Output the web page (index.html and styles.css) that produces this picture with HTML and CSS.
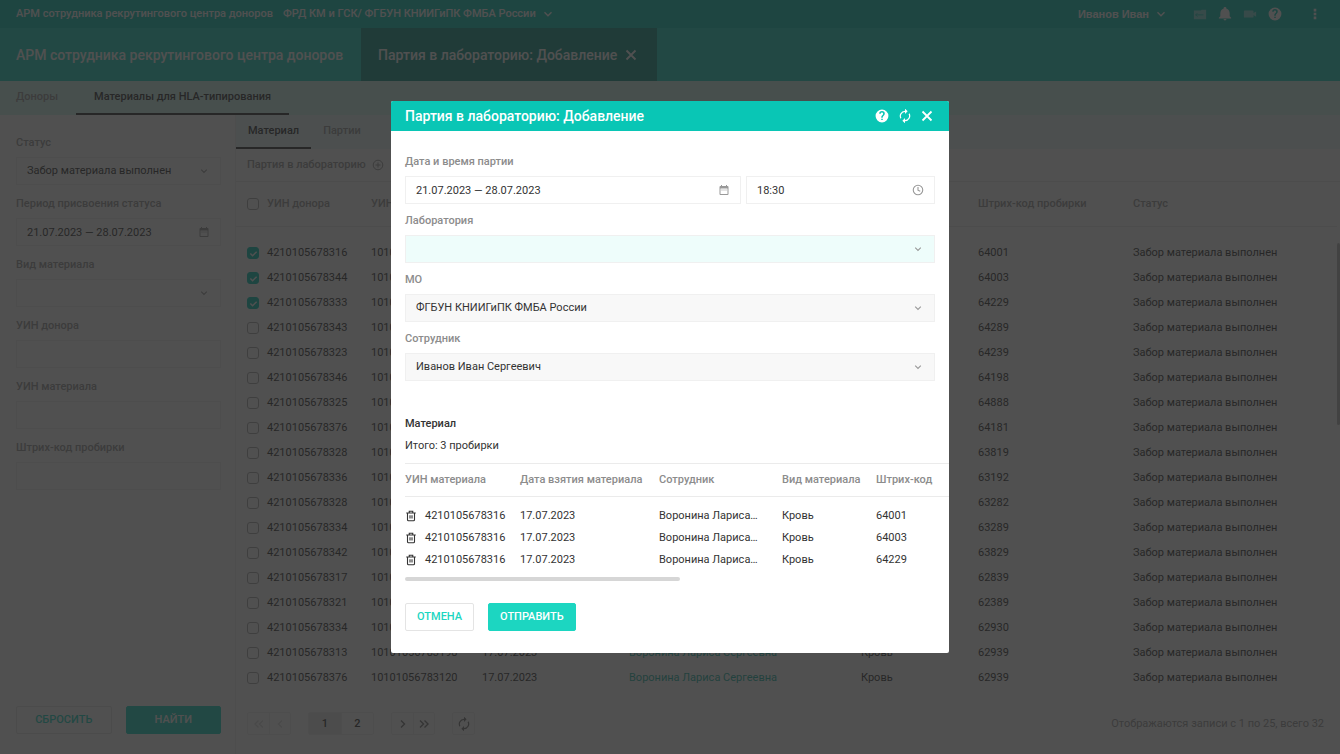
FILE: index.html
```html
<!DOCTYPE html>
<html lang="ru">

<head>
    <meta charset="UTF-8">
    <meta name="viewport" content="width=device-width, initial-scale=1.0">
    <title>Партия в лабораторию: Добавление</title>
    <link rel="stylesheet" href="styles.css">
</head>

<body>
    <!-- Shared icons -->
    <svg class="sprite" aria-hidden="true">
        <symbol id="i-chevron" viewBox="0 0 10 10"><path d="M1.5 3.2 5 6.7l3.5-3.5" fill="none" stroke="currentColor" stroke-width="1.4"/></symbol>
        <symbol id="i-close" viewBox="0 0 12 12"><path d="M1.5 1.5l9 9M10.5 1.5l-9 9" fill="none" stroke="currentColor" stroke-width="1.8"/></symbol>
        <symbol id="i-calendar" viewBox="0 0 24 24"><path d="M19 4h-1V2h-2v2H8V2H6v2H5a2 2 0 0 0-2 2v14a2 2 0 0 0 2 2h14a2 2 0 0 0 2-2V6a2 2 0 0 0-2-2zm0 16H5V9h14v11zM7 11h2v2H7zm4 0h2v2h-2zm4 0h2v2h-2z" fill="currentColor"/></symbol>
        <symbol id="i-clock" viewBox="0 0 24 24"><circle cx="12" cy="12" r="9.5" fill="none" stroke="currentColor" stroke-width="2.2"/><path d="M12 6v6.5l4.5 2" fill="none" stroke="currentColor" stroke-width="2.2"/></symbol>
        <symbol id="i-help" viewBox="0 0 24 24"><path d="M12 1a11 11 0 1 0 0 22 11 11 0 0 0 0-22zm1.3 18h-2.6v-2.5h2.6V19zm2.3-8.2-1 1c-.8.9-1.3 1.5-1.3 3.2h-2.6v-.6c0-1.3.5-2.3 1.3-3.2l1.4-1.4c.4-.4.6-.9.6-1.5a2.1 2.1 0 0 0-4.2 0H7.2a4.8 4.8 0 0 1 9.6 0c0 1-.5 1.9-1.2 2.5z" fill="currentColor"/></symbol>
        <symbol id="i-refresh" viewBox="0 0 24 24"><path d="M12 5v3.500l4.500-4.500L12-.5V3A9 9 0 0 0 4.300 16.700l1.500-1.500A7 7 0 0 1 12 5zm7.700 2.300-1.500 1.500A7 7 0 0 1 12 19v-3.500L7.500 20l4.500 4.500V21a9 9 0 0 0 7.700-13.700z" fill="currentColor"/></symbol>
        <symbol id="i-trash" viewBox="0 0 24 24"><path d="M2.5 6h19M8.5 5.500V2.500h7v3M5 6v13.500a2 2 0 0 0 2 2h10a2 2 0 0 0 2-2V6M10 10.500v6.500M14 10.500v6.500" fill="none" stroke="currentColor" stroke-width="2.2"/></symbol>
        <symbol id="i-plus" viewBox="0 0 12 12"><circle cx="6" cy="6" r="4.8" fill="none" stroke="currentColor"/><path d="M6 3.500v5M3.500 6h5" stroke="currentColor"/></symbol>
        <symbol id="i-angle" viewBox="0 0 10 10"><path d="M3 1.500 6.500 5 3 8.500" fill="none" stroke="currentColor" stroke-width="1.4"/></symbol>
        <symbol id="i-angles" viewBox="0 0 10 10"><path d="M1 1.500 4.500 5 1 8.500M5.500 1.500 9 5 5.500 8.500" fill="none" stroke="currentColor" stroke-width="1.4"/></symbol>
        <symbol id="i-card" viewBox="0 0 16 12"><path d="M1 2h8l1-1h5v11H1z" fill="currentColor"/><path d="M3 7h9M5 5 3 7l2 2" fill="none" stroke="#09c6b5"/></symbol>
        <symbol id="i-bell" viewBox="0 0 24 24"><path d="M12 23a2.5 2.5 0 0 0 2.5-2.5h-5A2.5 2.5 0 0 0 12 23zm8-7v-5.500c0-3.600-2.300-6.600-5.500-7.500V2.500a2.500 2.500 0 0 0-5 0V3C6.300 3.900 4 6.900 4 10.500V16l-2.500 2.500v1h21v-1z" fill="currentColor"/></symbol>
        <symbol id="i-camera" viewBox="0 0 16 12"><path d="M1 3a1 1 0 0 1 1-1h9a1 1 0 0 1 1 1v1.8L15 3v6l-3-1.800V9a1 1 0 0 1-1 1H2a1 1 0 0 1-1-1z" fill="currentColor"/></symbol>
        <symbol id="i-dots" viewBox="0 0 4 14"><path d="M.5 1h3v3h-3zM.5 5.500h3v3h-3zM.5 10h3v3h-3z" fill="currentColor"/></symbol>
    </svg>

    <div class="app">
        <header class="topbar">
            <span>АРМ сотрудника рекрутингового центра доноров</span>
            <button class="topbar-org">ФРД КМ и ГСК/ ФГБУН КНИИГиПК ФМБА России <svg class="icon"><use href="#i-chevron"/></svg></button>
            <button class="topbar-user">Иванов Иван <svg class="icon"><use href="#i-chevron"/></svg></button>
            <div class="topbar-icons">
                <button class="muted" aria-label="Карта"><svg class="icon wide"><use href="#i-card"/></svg></button>
                <button aria-label="Уведомления"><svg class="icon wide"><use href="#i-bell"/></svg></button>
                <button class="muted" aria-label="Видео"><svg class="icon wide"><use href="#i-camera"/></svg></button>
                <button aria-label="Помощь"><svg class="icon wide"><use href="#i-help"/></svg></button>
            </div>
            <button class="topbar-menu" aria-label="Меню"><svg class="icon"><use href="#i-dots"/></svg></button>
        </header>

        <div class="windows">
            <a href="#" class="window-tab">АРМ сотрудника рекрутингового центра доноров</a>
            <div class="window-tab active">
                <span>Партия в лабораторию: Добавление</span>
                <button aria-label="Закрыть вкладку"><svg class="icon"><use href="#i-close"/></svg></button>
            </div>
        </div>

        <nav class="sections">
            <a href="#">Доноры</a>
            <a href="#" class="active">Материалы для HLA-типирования</a>
        </nav>

        <div class="workspace">
            <form class="filters">
                <div class="field">
                    <label for="f-status">Статус</label>
                    <div class="control">
                        <select id="f-status"><option>Забор материала выполнен</option></select>
                        <svg class="icon arrow"><use href="#i-chevron"/></svg>
                    </div>
                </div>
                <div class="field">
                    <label for="f-period">Период присвоения статуса</label>
                    <div class="control">
                        <input id="f-period" type="text" value="21.07.2023 — 28.07.2023">
                        <svg class="icon"><use href="#i-calendar"/></svg>
                    </div>
                </div>
                <div class="field">
                    <label for="f-kind">Вид материала</label>
                    <div class="control">
                        <select id="f-kind"><option></option></select>
                        <svg class="icon arrow"><use href="#i-chevron"/></svg>
                    </div>
                </div>
                <div class="field">
                    <label for="f-donor">УИН донора</label>
                    <div class="control"><input id="f-donor" type="text"></div>
                </div>
                <div class="field">
                    <label for="f-material">УИН материала</label>
                    <div class="control"><input id="f-material" type="text"></div>
                </div>
                <div class="field">
                    <label for="f-barcode">Штрих-код пробирки</label>
                    <div class="control"><input id="f-barcode" type="text"></div>
                </div>
                <div class="filters-actions">
                    <button type="reset" class="btn">СБРОСИТЬ</button>
                    <button type="button" class="btn primary">НАЙТИ</button>
                </div>
            </form>

            <main class="content">
                <nav class="tabs">
                    <a href="#" class="active">Материал</a>
                    <a href="#">Партии</a>
                </nav>
                <div class="toolbar">
                    <button>Партия в лабораторию <svg class="icon"><use href="#i-plus"/></svg></button>
                </div>
                <div class="grid-wrap">
                    <table class="grid">
                        <colgroup>
                            <col class="c-check"><col class="c-donor"><col class="c-material"><col class="c-date">
                            <col class="c-person"><col class="c-kind"><col class="c-barcode"><col>
                        </colgroup>
                        <thead>
                            <tr>
                                <th><input type="checkbox" aria-label="Выбрать все"></th>
                                <th>УИН донора</th>
                                <th>УИН материала</th>
                                <th>Дата взятия материала</th>
                                <th>Сотрудник</th>
                                <th>Вид материала</th>
                                <th>Штрих-код пробирки</th>
                                <th>Статус</th>
                            </tr>
                        </thead>
                        <tbody id="rows"></tbody>
                    </table>
                    <div class="scroll-thumb"></div>
                </div>
                <footer class="pager">
                    <div class="pager-group">
                        <button disabled aria-label="Первая"><svg class="icon flip"><use href="#i-angles"/></svg></button>
                        <button disabled aria-label="Предыдущая"><svg class="icon flip"><use href="#i-angle"/></svg></button>
                    </div>
                    <div class="pager-group pages">
                        <button class="current">1</button>
                        <button>2</button>
                    </div>
                    <div class="pager-group">
                        <button aria-label="Следующая"><svg class="icon"><use href="#i-angle"/></svg></button>
                        <button aria-label="Последняя"><svg class="icon"><use href="#i-angles"/></svg></button>
                    </div>
                    <div class="pager-group">
                        <button aria-label="Обновить"><svg class="icon large"><use href="#i-refresh"/></svg></button>
                    </div>
                    <span class="pager-info">Отображаются записи с 1 по 25, всего 32</span>
                </footer>
            </main>
        </div>
    </div>

    <div class="overlay">
        <div class="modal" role="dialog" aria-labelledby="modal-title">
            <div class="modal-header">
                <h1 id="modal-title">Партия в лабораторию: Добавление</h1>
                <button aria-label="Помощь"><svg class="icon"><use href="#i-help"/></svg></button>
                <button aria-label="Обновить"><svg class="icon"><use href="#i-refresh"/></svg></button>
                <button aria-label="Закрыть"><svg class="icon small"><use href="#i-close"/></svg></button>
            </div>
            <form class="modal-body">
                <div class="field">
                    <label for="m-date">Дата и время партии</label>
                    <div class="field-row">
                        <div class="control">
                            <input id="m-date" type="text" value="21.07.2023 — 28.07.2023">
                            <svg class="icon"><use href="#i-calendar"/></svg>
                        </div>
                        <div class="control">
                            <input id="m-time" type="text" value="18:30" aria-label="Время партии">
                            <svg class="icon"><use href="#i-clock"/></svg>
                        </div>
                    </div>
                </div>
                <div class="field">
                    <label for="m-lab">Лаборатория</label>
                    <div class="control required">
                        <select id="m-lab"><option></option></select>
                        <svg class="icon arrow"><use href="#i-chevron"/></svg>
                    </div>
                </div>
                <div class="field">
                    <label for="m-org">МО</label>
                    <div class="control readonly">
                        <select id="m-org"><option>ФГБУН КНИИГиПК ФМБА России</option></select>
                        <svg class="icon arrow"><use href="#i-chevron"/></svg>
                    </div>
                </div>
                <div class="field">
                    <label for="m-person">Сотрудник</label>
                    <div class="control readonly">
                        <select id="m-person"><option>Иванов Иван Сергеевич</option></select>
                        <svg class="icon arrow"><use href="#i-chevron"/></svg>
                    </div>
                </div>

                <h2>Материал</h2>
                <p class="total">Итого: 3 пробирки</p>

                <div class="samples-wrap">
                    <table class="samples">
                        <colgroup>
                            <col class="s-uin"><col class="s-date"><col class="s-person"><col class="s-kind"><col>
                        </colgroup>
                        <thead>
                            <tr>
                                <th>УИН материала</th>
                                <th>Дата взятия материала</th>
                                <th>Сотрудник</th>
                                <th>Вид материала</th>
                                <th>Штрих-код</th>
                            </tr>
                        </thead>
                        <tbody>
                            <tr>
                                <td><button type="button" aria-label="Удалить"><svg class="icon"><use href="#i-trash"/></svg></button>4210105678316</td>
                                <td>17.07.2023</td>
                                <td>Воронина Лариса…</td>
                                <td>Кровь</td>
                                <td>64001</td>
                            </tr>
                            <tr>
                                <td><button type="button" aria-label="Удалить"><svg class="icon"><use href="#i-trash"/></svg></button>4210105678316</td>
                                <td>17.07.2023</td>
                                <td>Воронина Лариса…</td>
                                <td>Кровь</td>
                                <td>64003</td>
                            </tr>
                            <tr>
                                <td><button type="button" aria-label="Удалить"><svg class="icon"><use href="#i-trash"/></svg></button>4210105678316</td>
                                <td>17.07.2023</td>
                                <td>Воронина Лариса…</td>
                                <td>Кровь</td>
                                <td>64229</td>
                            </tr>
                        </tbody>
                    </table>
                    <div class="scroll-track"></div>
                </div>

                <div class="modal-actions">
                    <button type="button" class="btn">ОТМЕНА</button>
                    <button type="button" class="btn primary">ОТПРАВИТЬ</button>
                </div>
            </form>
        </div>
    </div>

    <script>
        // donor id, material id, barcode
        const samples = [
            ['4210105678316', '10101056783101', '64001'],
            ['4210105678344', '10101056783102', '64003'],
            ['4210105678333', '10101056783103', '64229'],
            ['4210105678343', '10101056783104', '64289'],
            ['4210105678323', '10101056783105', '64239'],
            ['4210105678346', '10101056783106', '64198'],
            ['4210105678325', '10101056783107', '64888'],
            ['4210105678376', '10101056783108', '64181'],
            ['4210105678328', '10101056783109', '63819'],
            ['4210105678336', '10101056783110', '63192'],
            ['4210105678328', '10101056783111', '63282'],
            ['4210105678334', '10101056783112', '63289'],
            ['4210105678342', '10101056783113', '63829'],
            ['4210105678317', '10101056783114', '62839'],
            ['4210105678321', '10101056783115', '62389'],
            ['4210105678334', '10101056783116', '62930'],
            ['4210105678313', '10101056783198', '62939'],
            ['4210105678376', '10101056783120', '62939']
        ];

        document.getElementById('rows').innerHTML = samples.map(([donor, material, barcode], i) => `
            <tr>
                <td><input type="checkbox" aria-label="${donor}" ${i < 3 ? 'checked' : ''}></td>
                <td>${donor}</td>
                <td>${material}</td>
                <td>17.07.2023</td>
                <td><a href="#">Воронина Лариса Сергеевна</a></td>
                <td>Кровь</td>
                <td>${barcode}</td>
                <td>Забор материала выполнен</td>
            </tr>`).join('');
    </script>
</body>

</html>
```

FILE: styles.css
```css
* {
    box-sizing: border-box;
}

body {
    margin: 0;
    font-family: Roboto, "Liberation Sans", sans-serif;
    font-size: 11px;
    line-height: 14px;
    color: #333;
    background: #fff;
}

button,
input,
select {
    font: inherit;
    color: inherit;
}

button {
    display: inline-flex;
    align-items: center;
    justify-content: center;
    padding: 0;
    border: none;
    background: none;
    cursor: pointer;
}

a {
    color: inherit;
    text-decoration: none;
}

.sprite {
    display: none;
}

.icon {
    display: block;
    flex: none;
    width: 10px;
    height: 10px;
}

.app {
    display: flex;
    flex-direction: column;
    height: 100vh;
    overflow: hidden;
}

/* Top bar */
.topbar {
    display: flex;
    align-items: center;
    gap: 10px;
    height: 28px;
    padding: 0 23px 0 16px;
    background: #09c6b5;
    color: #fff;
    font-weight: 500;
}

.topbar-org,
.topbar-user {
    gap: 7px;
}

.topbar-user {
    margin-left: auto;
    font-family: "Liberation Sans", Arial, sans-serif;
    font-weight: bold;
}

.topbar-icons {
    display: flex;
    gap: 11px;
    margin: 0 21px 0 17px;
}

.topbar-icons .wide {
    width: 14px;
    height: 14px;
}

.topbar-icons .muted {
    opacity: 0.5;
}

.topbar-menu .icon {
    width: 4px;
    height: 12px;
}

/* Open windows */
.windows {
    display: flex;
    height: 53px;
    background: #1cd6c1;
    color: #fff;
    font-size: 14px;
    font-weight: 500;
}

.window-tab {
    display: flex;
    align-items: center;
    gap: 8px;
    padding: 0 18px 0 16px;
}

.window-tab.active {
    padding: 0 20px 0 17px;
    background: #0f9688;
}

.window-tab .icon {
    width: 12px;
    height: 12px;
}

/* Sections and tabs */
.sections,
.tabs {
    display: flex;
    flex: none;
    color: #999;
    font-weight: 500;
}

.sections {
    height: 34px;
    background: #d2f8f1;
}

.tabs {
    height: 34px;
    background: #e8fbfb;
}

.sections a,
.tabs a {
    display: flex;
    align-items: center;
    border-bottom: 2px solid transparent;
}

.sections a {
    padding: 0 18px;
}

.sections a:first-child {
    padding-left: 16px;
}

.tabs a {
    padding: 0 12px;
}

.sections .active,
.tabs .active {
    color: #333;
    border-color: #333;
}

.workspace {
    display: flex;
    flex: 1;
    min-height: 0;
}

/* Form fields */
.field label {
    display: block;
    color: #8c8c8c;
    font-weight: 500;
}

.control {
    display: flex;
    align-items: center;
    height: 28px;
    padding-right: 10px;
    border: 1px solid #f0f0f0;
    background: #fff;
    color: #999;
}

.control input,
.control select {
    flex: 1;
    min-width: 0;
    height: 100%;
    padding: 0 0 0 10px;
    border: none;
    outline: none;
    appearance: none;
    background: none;
    color: #333;
}

.control .icon {
    width: 12px;
    height: 12px;
    pointer-events: none;
}

.control .arrow {
    width: 8px;
    height: 8px;
    margin-right: 2px;
}

.control.required {
    background: #eefdfb;
}

.control.readonly {
    background: #f8f8f8;
}

.btn {
    height: 28px;
    padding: 0 11px;
    border: 1px solid #e4e4e4;
    border-radius: 2px;
    background: #fff;
    color: #1cd6c1;
    font-weight: 500;
}

.btn.primary {
    border-color: #1cd6c1;
    background: #1cd6c1;
    color: #fff;
}

/* Filters */
.filters {
    display: flex;
    flex-direction: column;
    gap: 12px;
    flex: none;
    width: 236px;
    padding: 21px 14px 20px 16px;
    border-right: 1px solid #f0f0f0;
}

.filters label {
    margin-bottom: 7px;
    color: #999;
}

.filters-actions {
    display: flex;
    gap: 14px;
    margin-top: auto;
}

.filters-actions .btn {
    flex: 1;
}

/* Content */
.content {
    display: flex;
    flex-direction: column;
    flex: 1;
    min-width: 0;
}

.toolbar {
    display: flex;
    align-items: center;
    height: 33px;
    padding: 0 11px;
    border-bottom: 1px solid #ebebeb;
    color: #999;
    font-weight: 500;
}

.toolbar button {
    gap: 6px;
}

.toolbar .icon {
    width: 12px;
    height: 12px;
}

.grid-wrap {
    display: flex;
    flex: 1;
    min-height: 0;
    overflow: hidden;
}

.grid {
    flex: 1;
    align-self: flex-start;
    min-width: 0;
    table-layout: fixed;
    border-collapse: collapse;
}

.grid th,
.grid td {
    padding: 0;
    text-align: left;
    white-space: nowrap;
}

.grid th {
    height: 44px;
    border-bottom: 1px solid #ebebeb;
    color: #999;
    font-weight: 500;
}

.grid tbody::before {
    content: "";
    display: block;
    height: 14px;
}

.grid td {
    height: 25px;
}

.grid th:first-child,
.grid td:first-child {
    padding-left: 11px;
}

.grid td a {
    color: #1cb5a4;
}

.c-check { width: 31px; }
.c-donor { width: 104px; }
.c-material { width: 111px; }
.c-date { width: 147px; }
.c-person { width: 232px; }
.c-kind { width: 117px; }
.c-barcode { width: 155px; }

input[type="checkbox"] {
    display: block;
    width: 12px;
    height: 12px;
    margin: 0;
    border: 1px solid #aaa;
    border-radius: 3px;
    appearance: none;
    background: #fff;
}

input[type="checkbox"]:checked {
    border-color: #09c6b5;
    background: #09c6b5 url("data:image/svg+xml,%3Csvg xmlns='http://www.w3.org/2000/svg' viewBox='0 0 10 10'%3E%3Cpath d='M1.5 5 4 7.5 8.5 3' fill='none' stroke='white' stroke-width='1.6'/%3E%3C/svg%3E") center / 9px no-repeat;
}

.scroll-thumb {
    flex: none;
    width: 3px;
    height: 182px;
    margin-top: 61px;
    border-radius: 2px;
    background: #bbb;
}

/* Pager */
.pager {
    display: flex;
    align-items: center;
    gap: 17px;
    padding: 0 16px 19px 11px;
}

.pager-group {
    display: flex;
    border: 1px solid #f0f0f0;
    border-radius: 2px;
    color: #777;
}

.pager-group button {
    width: 21px;
    height: 21px;
}

.pager-group button + button {
    border-left: 1px solid #f0f0f0;
}

.pager-group button:disabled {
    color: #ddd;
}

.pages {
    color: #333;
    font-weight: 500;
}

.pages button {
    width: 32px;
}

.pages .current {
    background: #ececec;
}

.pager .large {
    width: 14px;
    height: 14px;
}

.flip {
    transform: scaleX(-1);
}

.pager-info {
    margin-left: auto;
    color: #999;
}

/* Modal */
.overlay {
    position: fixed;
    inset: 0;
    display: flex;
    align-items: center;
    justify-content: center;
    background: rgba(36, 36, 36, 0.8);
}

.modal {
    width: 558px;
    max-width: 100%;
    border-radius: 2px;
    overflow: hidden;
    background: #fff;
}

.modal-header {
    display: flex;
    align-items: center;
    gap: 9px;
    height: 30px;
    padding: 0 16px 0 14px;
    background: #09c6b5;
    color: #fff;
}

.modal-header h1 {
    flex: 1;
    margin: 0;
    font-size: 14px;
    font-weight: 500;
}

.modal-header .icon {
    width: 14px;
    height: 14px;
}

.modal-header .small {
    width: 12px;
    height: 12px;
}

.modal-body {
    padding: 24px 14px 22px;
}

.modal-body .field {
    margin-bottom: 10px;
}

.modal-body label {
    margin-bottom: 7px;
}

.field-row {
    display: grid;
    grid-template-columns: 16fr 9fr;
    gap: 5px;
}

.modal h2 {
    margin: 36px 0 8px;
    font-size: 11px;
    font-weight: 500;
}

.total {
    margin: 0 0 10px;
}

.samples-wrap {
    margin-right: -14px;
}

.samples {
    width: 100%;
    table-layout: fixed;
    border-collapse: collapse;
}

.samples th,
.samples td {
    padding: 0;
    text-align: left;
    white-space: nowrap;
}

.samples th {
    height: 33px;
    border-top: 1px solid #ebebeb;
    border-bottom: 1px solid #ebebeb;
    color: #8c8c8c;
    font-weight: 500;
}

.samples tbody::before {
    content: "";
    display: block;
    height: 8px;
}

.samples td {
    height: 22px;
}

.samples td button {
    margin-right: 8px;
    vertical-align: text-bottom;
}

.samples .icon {
    width: 12px;
    height: 12px;
}

.s-uin { width: 115px; }
.s-date { width: 139px; }
.s-person { width: 123px; }
.s-kind { width: 94px; }

.scroll-track {
    width: 275px;
    height: 4px;
    margin-top: 6px;
    border-radius: 2px;
    background: #d6d6d6;
}

.modal-actions {
    display: flex;
    gap: 14px;
    margin-top: 22px;
}
```
